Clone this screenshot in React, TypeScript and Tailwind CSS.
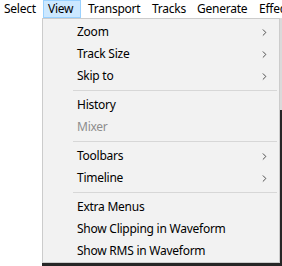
import { ChevronRight } from "lucide-react";

const barItems = [
  { label: "Select", cls: "w-[43px] pl-[4px]" },
  { label: "View", cls: "w-[38px] pl-[4px] border border-[#99d1ff] bg-[#cce8ff]" },
  { label: "Transport", cls: "w-[65px] pl-[7px]" },
  { label: "Tracks", cls: "w-[45px] pl-[6px]" },
  { label: "Generate", cls: "w-[62px] pl-[6px]" },
  { label: "Effect", cls: "pl-[6px]" },
];

type Entry =
  | { kind: "item"; label: string; sub?: boolean; disabled?: boolean }
  | { kind: "sep" };

const entries: Entry[] = [
  { kind: "item", label: "Zoom", sub: true },
  { kind: "item", label: "Track Size", sub: true },
  { kind: "item", label: "Skip to", sub: true },
  { kind: "sep" },
  { kind: "item", label: "History" },
  { kind: "item", label: "Mixer", disabled: true },
  { kind: "sep" },
  { kind: "item", label: "Toolbars", sub: true },
  { kind: "item", label: "Timeline", sub: true },
  { kind: "sep" },
  { kind: "item", label: "Extra Menus" },
  { kind: "item", label: "Show Clipping in Waveform" },
  { kind: "item", label: "Show RMS in Waveform" },
];

export default function App() {
  return (
    <div className="relative h-[266px] w-[282px] overflow-hidden bg-white font-['Noto_Sans',sans-serif] text-[12px] tracking-[-0.25px] text-black">
      {/* menu bar */}
      <div className="flex h-[18px] items-center whitespace-nowrap">
        {barItems.map((item) => (
          <div key={item.label} className={`flex h-[18px] shrink-0 items-center ${item.cls}`}>
            {item.label}
          </div>
        ))}
      </div>

      {/* app content behind the menu */}
      <div className="absolute left-[42px] top-[110px] h-[156px] w-[240px] bg-[#262626]" />
      <div className="absolute left-[279px] top-[18px] h-[92px] w-[3px] bg-[#dadada]" />

      {/* dropdown */}
      <div className="absolute left-[42px] top-[18px] w-[238px] border border-[#cccccc] bg-[#f2f2f2] pt-[2px]">
        {entries.map((e, i) =>
          e.kind === "sep" ? (
            <div key={i} className="flex h-[7px] items-center pl-[30px] pr-[2px]">
              <div className="h-px w-full bg-[#d7d7d7]" />
            </div>
          ) : (
            <div
              key={i}
              className={`flex h-[22px] items-center pl-[34px] pr-[9px] ${
                e.disabled ? "text-[#8d8d8d]" : "text-black"
              }`}
            >
              <span className="flex-1">{e.label}</span>
              {e.sub && <ChevronRight className="h-[11px] w-[11px] text-[#404040]" strokeWidth={2} />}
            </div>
          )
        )}
      </div>
    </div>
  );
}
